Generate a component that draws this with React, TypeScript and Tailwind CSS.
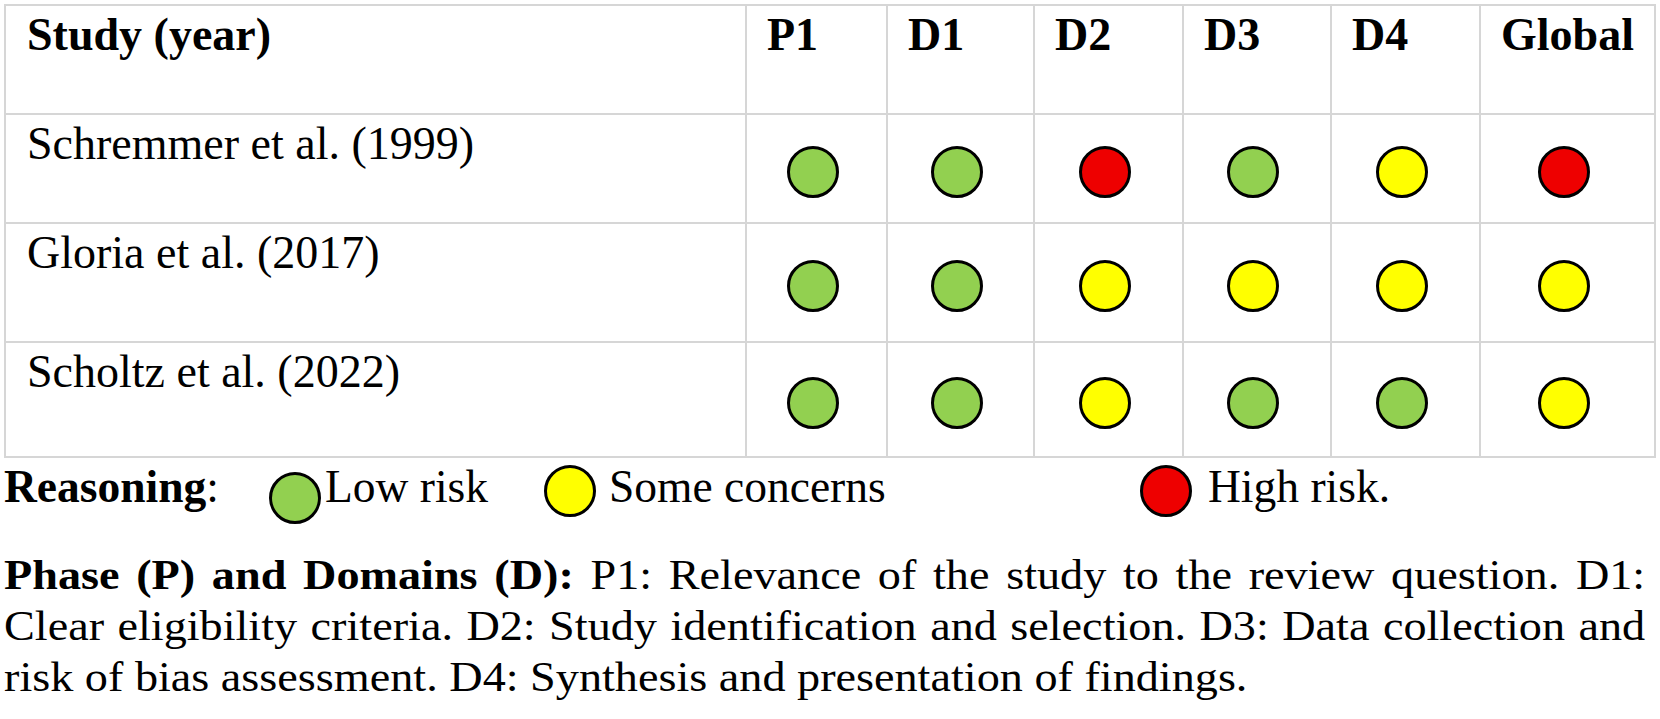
import React from "react";

type Mark = "g" | "y" | "r";

const fill: Record<Mark, string> = {
  g: "bg-[#92d050]",
  y: "bg-[#ffff00]",
  r: "bg-[#ee0000]",
};

function Dot({ m, className = "" }: { m: Mark; className?: string }) {
  return (
    <span
      className={`block w-[52px] h-[52px] shrink-0 rounded-full border-[3px] border-black ${fill[m]} ${className}`}
    />
  );
}

const headers = ["P1", "D1", "D2", "D3", "D4", "Global"];

const rows: { name: string; marks: Mark[] }[] = [
  { name: "Schremmer et al. (1999)", marks: ["g", "g", "r", "g", "y", "r"] },
  { name: "Gloria et al. (2017)", marks: ["g", "g", "y", "y", "y", "y"] },
  { name: "Scholtz et al. (2022)", marks: ["g", "g", "y", "g", "g", "y"] },
];

const cell = "border-r-2 border-b-2 border-[#d6d6d6]";

export default function App() {
  return (
    <div className="w-[1660px] h-[719px] bg-white text-black overflow-hidden font-['Liberation_Serif',serif] text-[45.5px] leading-[51.5px] pl-[4px] pt-[4px]">
      <div className="grid w-fit grid-cols-[741px_141px_147px_149px_148px_149px_175px] grid-rows-[109px_109px_119px_115px] border-l-2 border-t-2 border-[#d6d6d6] text-[46px]">
        <div className={`${cell} pl-[21px] pt-[3px] font-bold`}>Study (year)</div>
        {headers.map((h) => (
          <div key={h} className={`${cell} pl-5 pt-[3px] font-bold`}>
            {h}
          </div>
        ))}
        {rows.map((r) => (
          <React.Fragment key={r.name}>
            <div className={`${cell} pl-[21px] pt-[3px]`}>{r.name}</div>
            {r.marks.map((m, i) => (
              <div key={i} className={`${cell} flex items-center justify-center pt-[7px] pr-2`}>
                <Dot m={m} />
              </div>
            ))}
          </React.Fragment>
        ))}
      </div>

      <div className="mt-[3px] flex items-start h-[51.5px]">
        <div className="w-[265px] shrink-0">
          <span className="font-bold">Reasoning</span>:
        </div>
        <Dot m="g" className="mt-[11px]" />
        <div className="w-[223px] shrink-0 pl-[4px]">Low risk</div>
        <Dot m="y" className="mt-[4px]" />
        <div className="w-[544px] shrink-0 pl-[13px]">Some concerns</div>
        <Dot m="r" className="mt-[4px]" />
        <div className="pl-[16px]">High risk.</div>
      </div>

      <div className="mt-[37px] w-[1492px] origin-top-left scale-x-[1.1] text-[42px] leading-[51px]">
        <div className="whitespace-nowrap text-justify [text-align-last:justify]">
          <span className="font-bold">Phase (P) and Domains (D):</span> P1: Relevance of the study to the review question. D1:
        </div>
        <div className="whitespace-nowrap text-justify [text-align-last:justify]">
          Clear eligibility criteria. D2: Study identification and selection. D3: Data collection and
        </div>
        <div className="whitespace-nowrap">
          risk of bias assessment. D4: Synthesis and presentation of findings.
        </div>
      </div>
    </div>
  );
}
